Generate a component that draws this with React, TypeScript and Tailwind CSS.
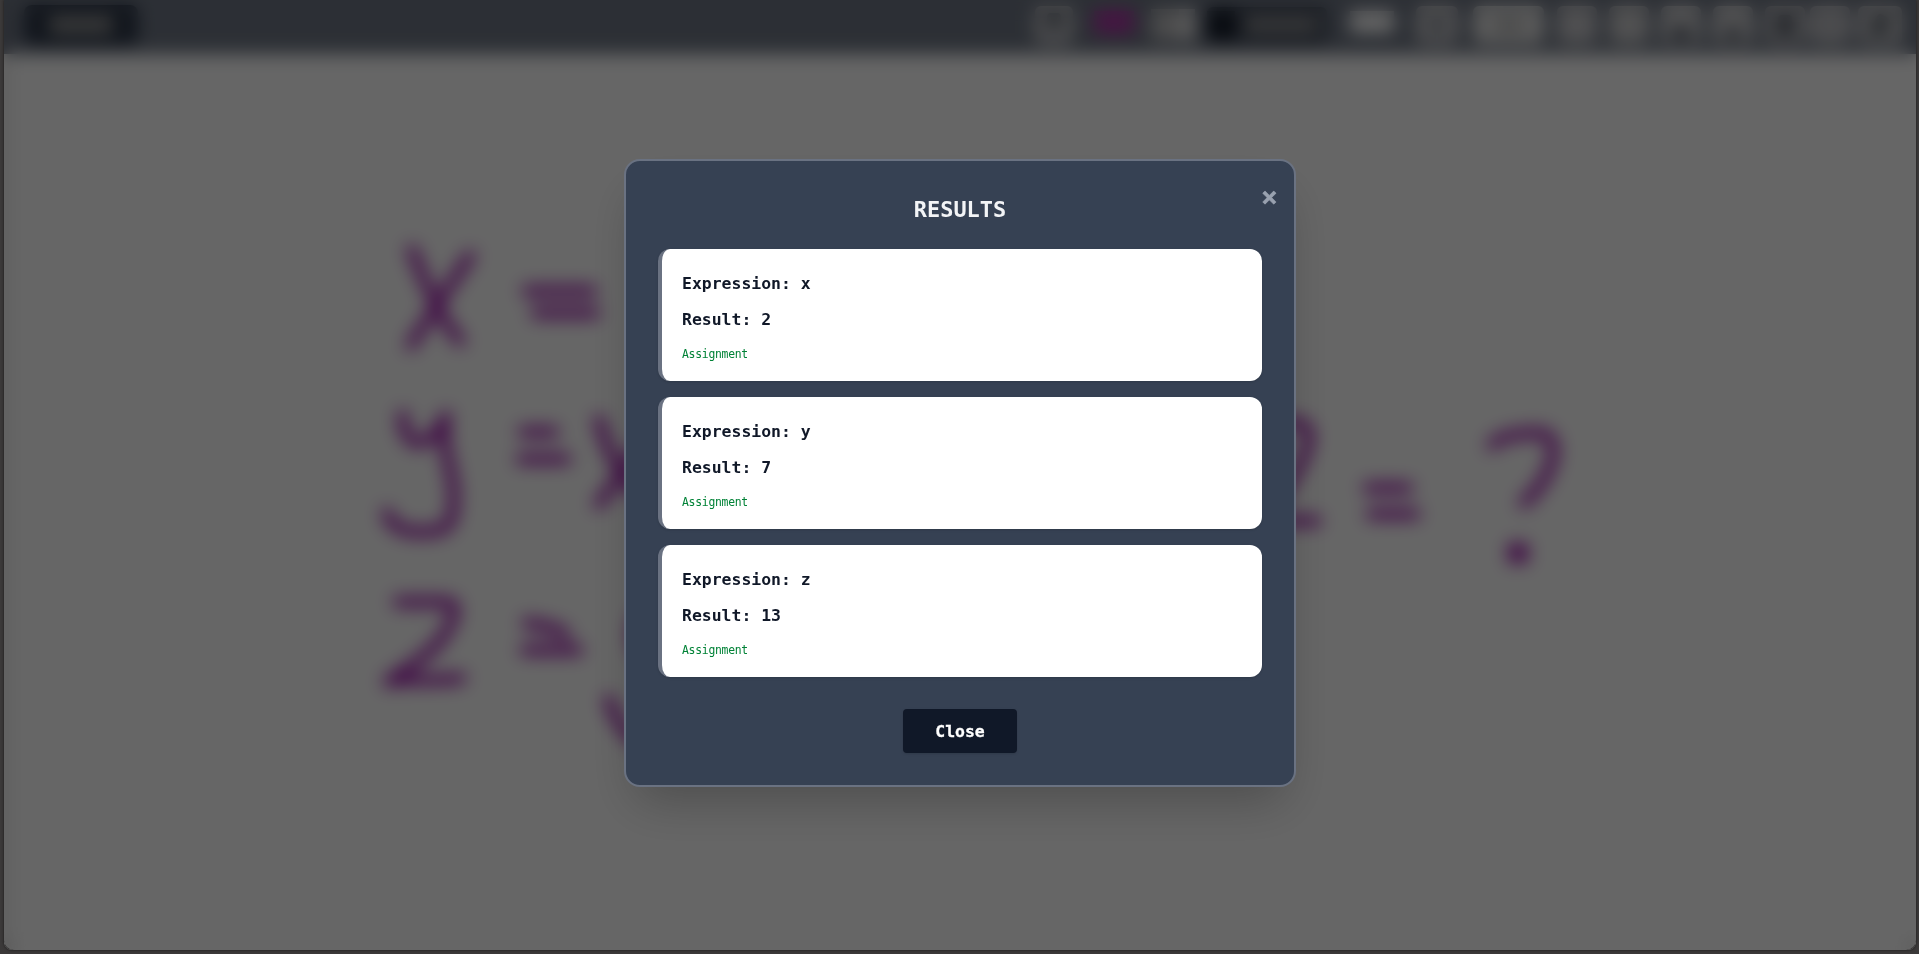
import { useState } from "react";

type Result = { expression: string; value: string };

const results: Result[] = [
  { expression: "x", value: "2" },
  { expression: "y", value: "7" },
  { expression: "z", value: "13" },
];

const strokes = [
  "M412 250 C422 276 440 318 460 341 M470 256 C452 282 426 322 411 345",
  "M527 291 H592 M536 313 H595",
  "M403 415 C402 452 430 452 446 416 C440 450 454 470 454 495 C454 528 448 532 420 532 C402 532 390 526 387 513",
  "M523 432 H554 M521 459 H566",
  "M599 420 C606 448 614 466 650 508 M660 424 C636 450 618 480 599 504",
  "M398 602 H446 C460 602 456 620 439 642 C426 658 404 670 388 682 C410 678 440 682 461 678",
  "M527 623 C540 625 558 628 565 634 M525 650 H578",
  "M650 606 C630 622 630 646 650 664",
  "M609 700 C613 712 618 726 636 742",
  "M1270 422 H1294 C1322 424 1308 460 1270 510 M1270 521 H1316",
  "M1368 488 H1408 M1371 514 H1415",
  "M1492 445 C1502 434 1530 433 1542 433 C1562 438 1556 474 1524 503",
  "M1513 548 H1523 V558 H1513 Z M1518 552 V554",
];

function ToolButton({ className, children }: { className: string; children?: React.ReactNode }) {
  return (
    <div className={`flex h-[38px] shrink-0 items-center justify-center rounded-md ${className}`}>
      {children}
    </div>
  );
}

function Toolbar() {
  return (
    <header className="flex h-[54px] items-center justify-between bg-[#6f7785] pr-[14px] pb-1 pl-[20px]">
      <div className="flex h-10 w-[114px] items-center justify-center rounded-lg bg-[#2b3546]">
        <div className="h-4 w-[64px] rounded bg-[#9a9a9a]" />
      </div>
      <div className="flex items-center">
        <ToolButton className="w-[38px] bg-[#c4c4c8]">
          <div className="mb-2 h-4 w-3.5 rounded bg-[#3b4553]" />
        </ToolButton>
        <div className="mb-1.5 ml-[21px] h-[22px] w-[40px] bg-[#b030a8]" />
        <div className="ml-[17px] flex h-[32px] w-[44px] justify-end bg-[#bcbcbe]">
          <div className="h-full w-4 bg-[#e2e2e2]" />
        </div>
        <div className="ml-3 flex h-9 w-[120px] items-center rounded-md bg-[#404857]">
          <div className="h-7 w-[28px] bg-[#121a28]" />
          <div className="ml-2.5 h-3 w-[72px] bg-[#a2a2a2]" />
        </div>
        <div className="mb-1.5 ml-[23px] h-[22px] w-[44px] bg-white" />
        <ToolButton className="ml-[22px] w-[42px] bg-[#c6c6ca]">
          <div className="size-3 rounded-full bg-[#3b4553]" />
        </ToolButton>
        <ToolButton className="ml-[15px] w-[71px] bg-[#e4e4e4]">
          <div className="h-2 w-8 bg-[#989898]" />
        </ToolButton>
        <ToolButton className="ml-[13px] w-10 bg-[#c6c6ca]" />
        <ToolButton className="ml-3 w-10 bg-[#cacacc]" />
        <ToolButton className="ml-3 w-10 bg-[#d2d2d4]">
          <div className="mt-4 h-4 w-4 rounded bg-[#4b5260]" />
        </ToolButton>
        <ToolButton className="ml-3 w-10 bg-[#d2d2d4]">
          <div className="mt-4 h-4 w-3 rounded bg-[#4b5260]" />
        </ToolButton>
        <ToolButton className="ml-3 w-10 bg-[#bebec2]">
          <div className="h-5 w-3.5 rounded bg-[#2a3342]" />
        </ToolButton>
        <ToolButton className="ml-[5px] w-10 bg-[#c6c6ca]">
          <div className="size-2 bg-[#808590]" />
        </ToolButton>
        <ToolButton className="ml-2 w-11 bg-[#cacacc]">
          <div className="h-5 w-3.5 rotate-[30deg] rounded bg-[#3b4553]" />
        </ToolButton>
      </div>
    </header>
  );
}

function ResultCard({ expression, value }: Result) {
  return (
    <div className="h-[132px] rounded-xl border-l-4 border-[#6a7282] bg-white px-5 pt-[21px] text-[16.44px] leading-7 text-[#101828] shadow-sm">
      <p className="font-bold">Expression: {expression}</p>
      <p className="mt-2 font-bold">Result: {value}</p>
      <p className="mt-3 text-[11.4px] leading-4 tracking-[-0.263px] text-[#008236]">Assignment</p>
    </div>
  );
}

export default function App() {
  const [open, setOpen] = useState(true);
  const close = () => setOpen(false);

  return (
    <div className="h-[954px] w-full overflow-hidden bg-[#3b3939] pr-[3px] pb-1 pl-1 font-['DejaVu_Sans_Mono',monospace]">
      <div className="relative h-[950px] overflow-hidden rounded-b-lg shadow-[0_0_3px_rgba(0,0,0,0.6)]">
        <div className="h-full overflow-hidden rounded-b-[10px] bg-white">
          <Toolbar />
        </div>
        <svg
          className="absolute inset-0 size-full"
          viewBox="4 0 1912 950"
          fill="none"
          stroke="#a21caf"
          strokeWidth="11"
          strokeLinecap="round"
          strokeLinejoin="round"
        >
          {strokes.map((d) => (
            <path key={d} d={d} />
          ))}
        </svg>
        {open && (
          <div className="absolute inset-0 flex items-center justify-center bg-black/60 pb-1 backdrop-blur-[9px]">
            <div className="relative w-[672px] rounded-2xl border-2 border-[#6a7282] bg-[#364153] p-8 shadow-2xl">
              <button
                onClick={close}
                aria-label="Dismiss"
                className="absolute top-[17px] right-3 flex h-9 w-[25px] items-center justify-center text-[27px] leading-none font-bold text-[#99a1af] [-webkit-text-stroke:0.6px_#99a1af]"
              >
                ×
              </button>
              <h2 className="mb-[23px] pt-px text-center text-[21.92px] leading-8 font-bold text-[#f3f4f6]">
                RESULTS
              </h2>
              <div className="flex flex-col gap-4">
                {results.map((r) => (
                  <ResultCard key={r.expression} {...r} />
                ))}
              </div>
              <div className="mt-8 flex justify-center">
                <button
                  onClick={close}
                  className="h-11 w-[114px] rounded bg-[#101828] pt-px text-[16.44px] leading-7 font-bold text-white shadow-sm [-webkit-text-stroke:0.3px_#ffffff]"
                >
                  Close
                </button>
              </div>
            </div>
          </div>
        )}
      </div>
    </div>
  );
}
